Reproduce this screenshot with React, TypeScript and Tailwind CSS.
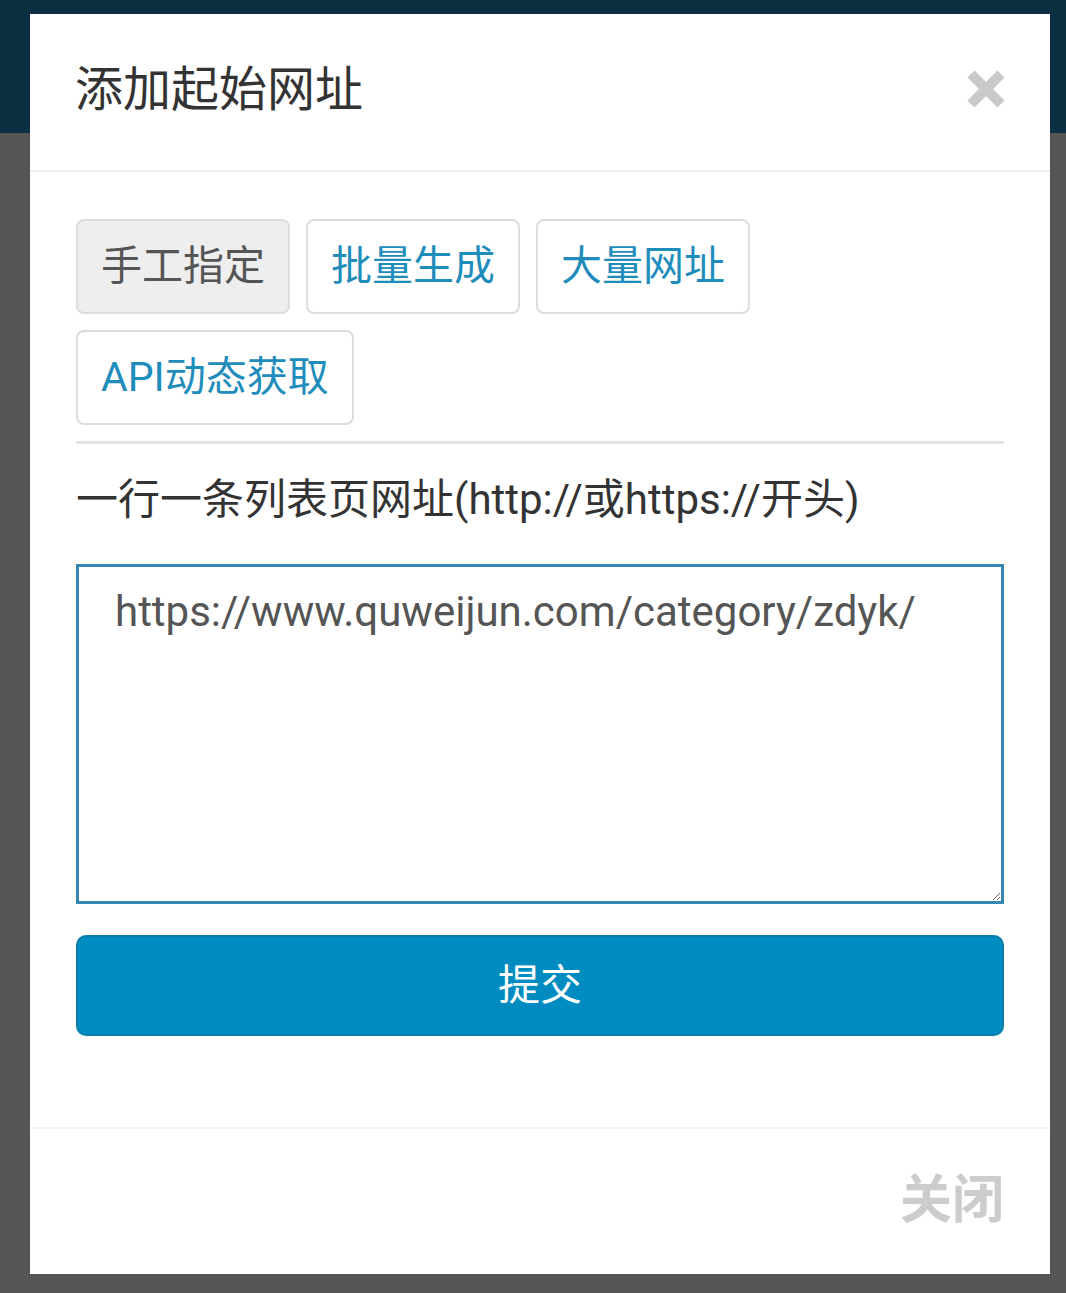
import React from "react"

const font = { fontFamily: 'Roboto, "Noto Sans CJK SC", sans-serif' }

function CloseIcon() {
  return (
    <svg width="38" height="38" viewBox="0 0 38 38" aria-hidden="true">
      <path d="M4 4 L34 34 M34 4 L4 34" stroke="#c9c9c9" strokeWidth="10" strokeLinecap="butt" />
    </svg>
  )
}

export default function App() {
  const tabs = [
    { label: "手工指定", active: true },
    { label: "批量生成", active: false },
    { label: "大量网址", active: false },
    { label: "API动态获取", active: false },
  ]

  return (
    <div className="relative min-h-[1293px] w-full bg-[#555556]" style={font}>
      <div className="h-[133px] w-full bg-[#0b3042]" />
      <div className="absolute left-[30px] top-[14px] w-[1020px] bg-white">
        <div className="flex h-[158px] items-center justify-between border-b-2 border-[#efefef] pl-[45px] pr-[47px]">
          <h4 className="text-[48px] leading-none text-[#333] mt-[-4px]">添加起始网址</h4>
          <button className="mr-[-2px] mt-[-6px]">
            <CloseIcon />
          </button>
        </div>

        <div className="px-[46px] pt-[47px] pb-[91px]">
          <div className="flex flex-wrap gap-x-[16px] gap-y-[16px]">
            {tabs.map((t) => (
              <button
                key={t.label}
                className={
                  t.active
                    ? "h-[95px] rounded-[8px] border-2 border-[#dcdcdc] bg-[#eeeeee] px-[23px] text-[41px] text-[#555]"
                    : "h-[95px] rounded-[8px] border-2 border-[#dcdcdc] bg-white px-[23px] text-[41px] text-[#1f8dbb]"
                }
              >
                {t.label}
              </button>
            ))}
          </div>
          <div className="mt-[16px] h-[3px] bg-[#e2e2e2]" />

          <p className="mt-[26px] text-[42px] leading-[60px] text-[#333]">
            一行一条列表页网址(http://或https://开头)
          </p>

          <textarea
            className="mt-[34px] block h-[340px] w-full border-[3px] border-[#3589b0] px-[36px] py-[16px] text-[42px] leading-[58px] text-[#555] outline-none"
            style={font}
            defaultValue="https://www.quweijun.com/category/zdyk/"
          />

          <button className="mt-[31px] h-[101px] w-full rounded-[10px] border-2 border-[#0a7eab] bg-[#008cc1] text-[42px] text-white">
            提交
          </button>
        </div>

        <div className="flex h-[147px] items-center justify-end border-t-2 border-[#f2f2f2] px-[46px]">
          <button className="text-[52px] font-bold leading-none text-[#cccccc] mt-[-2px]">关闭</button>
        </div>
      </div>
    </div>
  )
}
